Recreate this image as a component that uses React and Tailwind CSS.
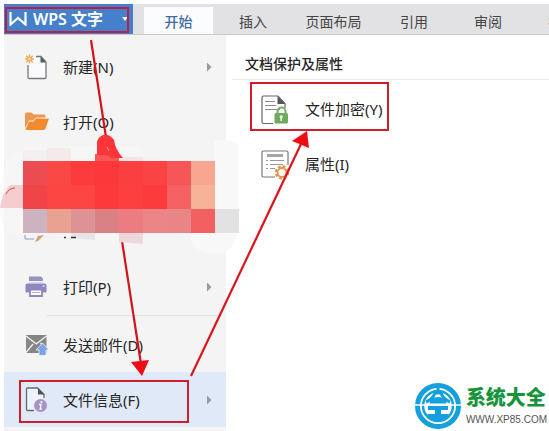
import React from "react";

const NewFileIcon = () => (
  <svg width="24" height="26" viewBox="0 0 24 26" fill="none">
    <path d="M9 3.5h6.5l5.5 5v16H3V11" fill="#fafafa" />
    <path d="M11 2.5h5l5 5.5v15.5a1 1 0 0 1-1 1H4a1 1 0 0 1-1-1V11" stroke="#74787c" strokeWidth="1.300" />
    <path d="M15.500 2.500v6H21z" fill="#55595d" />
    <path d="M4.500 0.500v9M0 5h9M1.300 1.800l6.400 6.400M7.700 1.800L1.300 8.200" stroke="#f0a24a" strokeWidth="1.300" />
    <circle cx="4.500" cy="5" r="1.800" fill="#fde3bd" stroke="#f0a24a" />
  </svg>
);

const FolderIcon = () => (
  <svg width="24" height="26" viewBox="0 0 24 26">
    <path d="M0 19V5q0-1.500 1.500-1.500h5l2 2H19q1.500 0 1.500 1.500v2L8 12l-4 0z" fill="#ec9850" />
    <path d="M0.500 20.500L4 12.500H8.500l3-3H24l-3.500 10q-.6 1.500-2 1.500H1z" fill="#f38a2c" />
    <path d="M3.500 12H8l3-3h11" fill="none" stroke="#fde5cd" />
  </svg>
);

const PrinterIcon = () => (
  <svg width="24" height="26" viewBox="0 0 24 26">
    <path d="M4 2.500h12l2 2v4H4z" fill="#9791c6" />
    <path d="M2.500 9.500h17q2 0 2 2v6q0 1-1 1h-3.500v-3H5v3H1.500q-1 0-1-1v-6q0-2 2-2z" fill="#8e88c0" />
    <path d="M4 7h14v1.500H4z" fill="#f4f4f5" />
    <path d="M5 15.500h12v6.500H5z" fill="#fff" stroke="#8e88c0" strokeWidth="1.800" />
    <path d="M7 18.500h8" stroke="#b4b0d8" />
    <circle cx="18.500" cy="12" r="1" fill="#dddaf0" />
  </svg>
);

const MailIcon = () => (
  <svg width="24" height="26" viewBox="0 0 24 26">
    <path d="M1 3h20.500v18H1z" fill="#858585" />
    <path d="M1 4l10.300 8L21.500 4M1 20.500l7-8.500M21.500 17l-6-6" fill="none" stroke="#f4f4f4" strokeWidth="1.300" />
    <path d="M17.500 11l6.500 7h-3v5.500h-7V18h-3z" fill="#7ba3e6" stroke="#f4f4f4" strokeWidth="0.800" />
  </svg>
);

const FileInfoIcon = () => (
  <svg width="24" height="26" viewBox="0 0 24 26">
    <path d="M9 23.500H2.500a1 1 0 0 1-1-1V2a1 1 0 0 1 1-1h10l6.500 6.500V11" fill="#eef3fb" stroke="#666a70" strokeWidth="1.300" />
    <path d="M13 1v6.500h6.500z" fill="#4f5358" />
    <circle cx="15.500" cy="18.500" r="6.500" fill="#a793c9" />
    <circle cx="16.500" cy="15" r="1.100" fill="#fff" />
    <path d="M14 17.500h2l-.8 4.500h1.500" fill="none" stroke="#fff" strokeWidth="1.300" />
  </svg>
);

const FileLockIcon = () => (
  <svg width="28" height="30" viewBox="0 0 28 30" fill="none">
    <path d="M12 28.500H2.500a1.500 1.500 0 0 1-1.500-1.500V2.500A1.500 1.500 0 0 1 2.500 1H17l7 7.500V13" stroke="#666" strokeWidth="1.200" />
    <path d="M16.500 1v8H24z" fill="#555" />
    <path d="M4 6.500h10M4 10.500h11M4 14.500h15" stroke="#8b8b8b" />
    <path d="M16.500 19v-2.500a4 4 0 0 1 8 0V19" stroke="#76b065" strokeWidth="2" />
    <rect x="13.500" y="18" width="13.500" height="10.500" rx="1.500" fill="#6dac5c" />
    <circle cx="20.200" cy="21.800" r="1.600" fill="#fff" />
    <path d="M20.200 22v4" stroke="#fff" strokeWidth="1.600" />
  </svg>
);

const PropertiesIcon = () => (
  <svg width="28" height="30" viewBox="0 0 28 30" fill="none">
    <path d="M14 27H2.500A1.500 1.500 0 0 1 1 25.500v-23A1.500 1.500 0 0 1 2.500 1h23A1.500 1.500 0 0 1 27 2.500V15" stroke="#777" strokeWidth="1.200" />
    <path d="M6 5.500h16" stroke="#a5a5a5" strokeWidth="3" />
    <path d="M5 10.500h2M9 10.500h14M5 14.500h2M9 14.500h13M5 18.500h2M9 18.500h5" stroke="#999" />
    <circle cx="21" cy="22.500" r="6" stroke="#e69349" strokeWidth="2.400" strokeDasharray="2.700 2.010" />
    <circle cx="21" cy="22.500" r="4.500" fill="#fff" stroke="#e69349" strokeWidth="1.800" />
  </svg>
);

const SubmenuArrow = () => (
  <svg className="ml-auto" width="5" height="10" viewBox="0 0 5 10">
    <path d="M0 0.500v9L4.500 5z" fill="#999" />
  </svg>
);

const MenuItem = ({ icon, label, arrow, active }) => (
  <button
    className={`flex h-[55px] w-full shrink-0 items-center pr-[14px] pl-[21px] text-left text-[15px] leading-5 ${active ? "bg-[#dfe9f8]" : ""}`}
  >
    <span className="mr-[14px] w-6">{icon}</span>
    {label}
    {arrow && <SubmenuArrow />}
  </button>
);

const tabs = [
  { label: "插入", width: "w-[74px]" },
  { label: "页面布局", width: "w-[87px]" },
  { label: "引用", width: "w-[74px]" },
  { label: "审阅", width: "w-[74px]" },
  { label: "视图", width: "w-[74px]" },
];

// Pixelated cover over two menu entries, 24px cells
const mosaic = [
  ["#ea4c52", "#fa4845", "#fc3b3c", "#fc383a", "#fa3f40", "#fa4343", "#f75658", "#f6a691"],
  ["#f04449", "#fa4543", "#fc4443", "#fd393a", "#fc3f3f", "#fc3c3c", "#f56063", "#f6b297"],
  ["#cdb3bf", "#e9a292", "#dd9295", "#d98184", "#ec7c81", "#eb8588", "#e98587", "#f26062", "#e2e2e2"],
];

const Annotations = () => (
  <svg className="pointer-events-none absolute top-0 left-0" width="549" height="431" viewBox="0 0 549 431" fill="none">
    <path d="M9 156q8-8 30-9l100-2q7 5 4 18v78l-45-1-75-6H9q-9-7-9-25 1-40 9-53z" fill="#f6f6f6" opacity="0.600" />
    <path d="M214 140q18-2 24 6v68q3 36-20 40-24 0-27-14v-20h23z" fill="#f8f8f8" />
    <path d="M91 40L141 364" stroke="#d1131d" strokeWidth="2.200" />
    <path d="M131 362l18-2-7 16z" fill="#ee0d12" />
    <path d="M191 376L301 144" stroke="#dc151c" strokeWidth="2.200" />
    <path d="M307 131l-15 10 17 7z" fill="#ee0d12" />

    <path d="M23 150h24v11H23z" fill="#f4efef" />
    <path d="M47 148h24v13H47z" fill="#f3eae9" />
    <path d="M95 154h24v7H95z" fill="#fb5759" />
    <path d="M119 157h24v4h-24z" fill="#f3e5e5" />
    <path d="M23 185H10q-8 8-10 23h23z" fill="#f5cdcf" />
    <path d="M6 194q3-6 9-6" stroke="#e5444b" />
    <path d="M119 232h24v12l-24-2z" fill="#edd8d9" />
    <path d="M71 232h24v8l-24-2z" fill="#e7e5e5" />
    <path d="M97 155v-13q1-5 6-7 7-1 11 5 1 9 9 18l-12 0-4-3z" fill="#fc3538" />
    <path d="M107 147l2 4" stroke="#fba1a1" />
    <path d="M25 235v4h9" stroke="#8aa0c8" />
    <path d="M35 242l3-6 6-1-6 6z" fill="#cda277" />
    <path d="M64 237.500h2M71 237.500h5" stroke="#333" strokeWidth="1.500" />
    {mosaic.map((row, y) =>
      row.map((color, x) => (
        <rect key={`${x}-${y}`} x={23 + x * 24} y={161 + y * 24} width="24" height="24" fill={color} shapeRendering="crispEdges" />
      ))
    )}

    <rect x="6" y="8" width="122" height="24" stroke="#b91d48" strokeWidth="2" />
    <rect x="20" y="381" width="168" height="41" stroke="#cf1d2b" strokeWidth="2" />
    <rect x="251" y="83" width="137" height="47" stroke="#cf1d2b" strokeWidth="2" />
  </svg>
);

const Watermark = () => (
  <div className="absolute right-[2px] bottom-[2px] flex items-center gap-[5px]">
    <svg width="46" height="46" viewBox="0 0 46 46" fill="none">
      <circle cx="23" cy="23" r="20.500" stroke="#14a0dc" strokeWidth="5" />
      <circle cx="23" cy="23" r="15" stroke="#14a0dc" strokeWidth="2.500" />
      {/* roof and dome */}
      <path d="M23 3v5M11 19q7-3 9-9h6q2 6 9 9" stroke="#14a0dc" strokeWidth="3" />
      <path d="M14.500 20.500q1-6.500 8.500-6.500t8.500 6.500z" fill="#14a0dc" />
      <path d="M0 22h46" stroke="#fff" strokeWidth="1.500" />
      {/* lower crossbars */}
      <path d="M13 23h20v4h-7v4h8l-4 6H16l-4-6h8v-4h-7z" fill="#14a0dc" />
    </svg>
    <div>
      <p className="text-[20px] leading-6 font-black text-[#15943c]">系统大全</p>
      <p className="mt-1 font-['Liberation_Sans',sans-serif] text-[10px] leading-3 text-[#555]">WWW.XP85.COM</p>
    </div>
  </div>
);

export default function App() {
  return (
    <div className="relative flex min-h-screen flex-col overflow-hidden bg-white pt-1 pl-1 font-['Noto_Sans','Noto_Sans_CJK_SC',sans-serif] text-[#262626]">
      {/* Ribbon tabs */}
      <header className="flex h-[31px] shrink-0 overflow-hidden border-b border-[#c9c9cc] bg-[#e2e1e4] text-[14px] leading-5 text-[#444]">
        <button className="flex w-[129px] shrink-0 items-center bg-[#4580cb] pl-[5px] text-[16px] font-semibold whitespace-nowrap text-white">
          <svg className="mr-[6px]" width="18" height="14" viewBox="0 0 18 14" fill="none">
            <path d="M1.500 0v12.500L9 6l7.500 6.500V0" stroke="#fff" strokeWidth="2.200" />
          </svg>
          WPS 文字
          <svg className="mr-[5px] ml-auto" width="6" height="4" viewBox="0 0 6 4">
            <path d="M0 0h6L3 4z" fill="#fff" />
          </svg>
        </button>
        <nav className="flex min-w-0 flex-1 overflow-hidden pl-[11px]">
          <button className="mt-[3px] mr-[3px] w-[69px] shrink-0 bg-[#fbfcfd] pt-[2px] font-medium text-[#3f6ba5]">开始</button>
          {tabs.map((tab) => (
            <button key={tab.label} className={`${tab.width} shrink-0 pt-[5px]`}>{tab.label}</button>
          ))}
        </nav>
      </header>

      <div className="flex flex-1">
        <aside className="w-[222px] shrink-0 bg-[#f4f4f5] pt-1">
          <MenuItem icon={<NewFileIcon />} label="新建(N)" arrow />
          <MenuItem icon={<FolderIcon />} label="打开(O)" />
          <div className="h-[110px]" />
          <MenuItem icon={<PrinterIcon />} label="打印(P)" arrow />
          <hr className="my-[1px] mr-2 ml-[43px] border-[#e2e2e4]" />
          <MenuItem icon={<MailIcon />} label="发送邮件(D)" />
          <MenuItem icon={<FileInfoIcon />} label="文件信息(F)" arrow active />
        </aside>

        <main className="min-w-0 flex-1 pt-[17px] pl-[6px]">
          <h2 className="pl-[13px] text-[14px] leading-6 font-medium">文档保护及属性</h2>
          <hr className="mt-[3px] border-[#ebebed]" />
          <div className="flex flex-col items-start pl-[29px]">
            <button className="mt-[2px] flex h-[55px] items-center gap-4 text-[15px]">
              <FileLockIcon />
              文件加密(Y)
            </button>
            <button className="flex h-[55px] items-center gap-4 text-[15px]">
              <PropertiesIcon />
              属性(I)
            </button>
          </div>
        </main>
      </div>

      <Annotations />
      <Watermark />
    </div>
  );
}
